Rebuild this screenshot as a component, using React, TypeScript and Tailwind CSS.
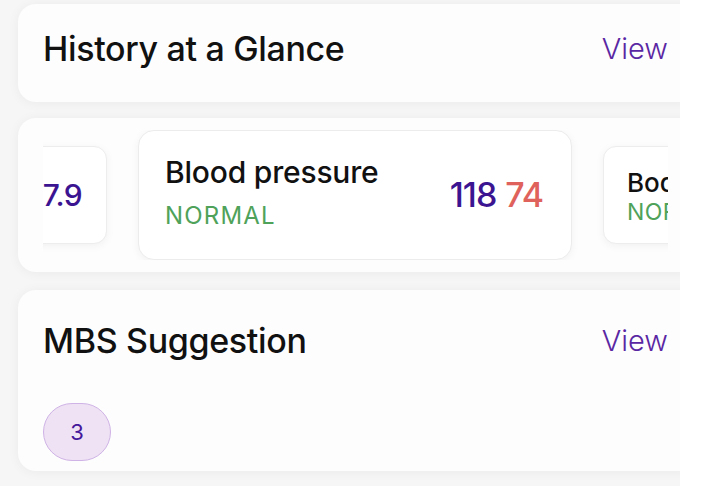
import React from "react";

type Metric = {
  title: string;
  status: string;
  primary: string;
  secondary?: string;
};

const SIDE_LEFT: Metric = { title: "Body mass index", status: "NORMAL", primary: "27.9" };
const MAIN: Metric = { title: "Blood pressure", status: "NORMAL", primary: "118", secondary: "74" };
const SIDE_RIGHT: Metric = { title: "Body weight", status: "NORMAL", primary: "72" };

function MetricCard({ m }: { m: Metric }) {
  return (
    <div className="flex h-[130px] w-[434px] shrink-0 items-center justify-between rounded-[16px] border border-[#ececec] bg-white pl-[26px] pr-[28px] shadow-[0_2px_8px_rgba(0,0,0,0.05)]">
      <div className="flex flex-col self-start pt-[23px]">
        <p className="text-[30px] font-medium leading-[36px] tracking-[-0.2px] text-[#111]">{m.title}</p>
        <p className="mt-[11px] text-[24px] leading-[30px] tracking-[0.05em] text-[#4fa25a]">
          {m.status}
        </p>
      </div>
      <p className="text-[34px] font-medium leading-[40px] tracking-[-0.03em]">
        <span className="text-[#3b1491]">{m.primary}</span>
        {m.secondary ? <span className="ml-[9px] text-[#e0625c]">{m.secondary}</span> : null}
      </p>
    </div>
  );
}

// the cards either side of the focused one are drawn smaller
function SideCard({ m }: { m: Metric }) {
  return (
    <div className="flex h-[98px] w-[327px] shrink-0 items-center justify-between rounded-[13px] border border-[#ededed] bg-white pl-[23px] pr-[24px] shadow-[0_2px_8px_rgba(0,0,0,0.05)]">
      <div className="flex min-w-0 flex-col self-start pt-[21px]">
        <p className="whitespace-nowrap text-[26px] font-medium leading-[30px] text-[#111]">{m.title}</p>
        <p className="mt-[1px] text-[23px] leading-[26px] tracking-[0.02em] text-[#4fa25a]">{m.status}</p>
      </div>
      <p className="text-[30px] font-medium leading-[34px] tracking-[-0.02em] text-[#3b1491]">{m.primary}</p>
    </div>
  );
}

function SectionHeader({ title }: { title: string }) {
  return (
    <div className="flex items-center justify-between">
      <h2 className="text-[34px] font-medium leading-[40px] tracking-[-0.01em] text-[#111]">{title}</h2>
      <span className="text-[29px] font-light leading-[40px] text-[#5a27a3]">View</span>
    </div>
  );
}

export default function App() {
  return (
    <div className="flex h-[486px] w-[710px] bg-white font-['Inter',sans-serif]">
      <div className="flex h-full w-[680px] flex-col overflow-hidden bg-[#f6f6f6] pl-[18px] pt-[4px]">
        <section className="h-[98px] w-[682px] shrink-0 rounded-[18px] bg-[#fdfdfd] pl-[25px] pr-[32px] pt-[25px] shadow-[0_1px_12px_rgba(0,0,0,0.05)]">
          <SectionHeader title="History at a Glance" />
        </section>

        <section className="mt-[16px] h-[154px] w-[682px] shrink-0 rounded-[18px] bg-[#fdfdfd] py-[12px] shadow-[0_1px_12px_rgba(0,0,0,0.05)]">
          <div className="ml-[25px] h-full w-[625px] overflow-hidden">
            <div className="-ml-[263px] flex h-full items-center gap-[31px]">
              <SideCard m={SIDE_LEFT} />
              <MetricCard m={MAIN} />
              <SideCard m={SIDE_RIGHT} />
            </div>
          </div>
        </section>

        <section className="mt-[18px] flex h-[181px] w-[682px] shrink-0 flex-col rounded-[18px] bg-[#fdfdfd] pl-[25px] pr-[32px] pt-[31px] shadow-[0_1px_12px_rgba(0,0,0,0.05)]">
          <SectionHeader title="MBS Suggestion" />
          <div className="mt-[42px] flex h-[58px] w-[68px] items-center justify-center rounded-full border border-[#cfb3e6] bg-[#efe2f4] text-[22px] text-[#45179a]">
            3
          </div>
        </section>
      </div>
    </div>
  );
}
